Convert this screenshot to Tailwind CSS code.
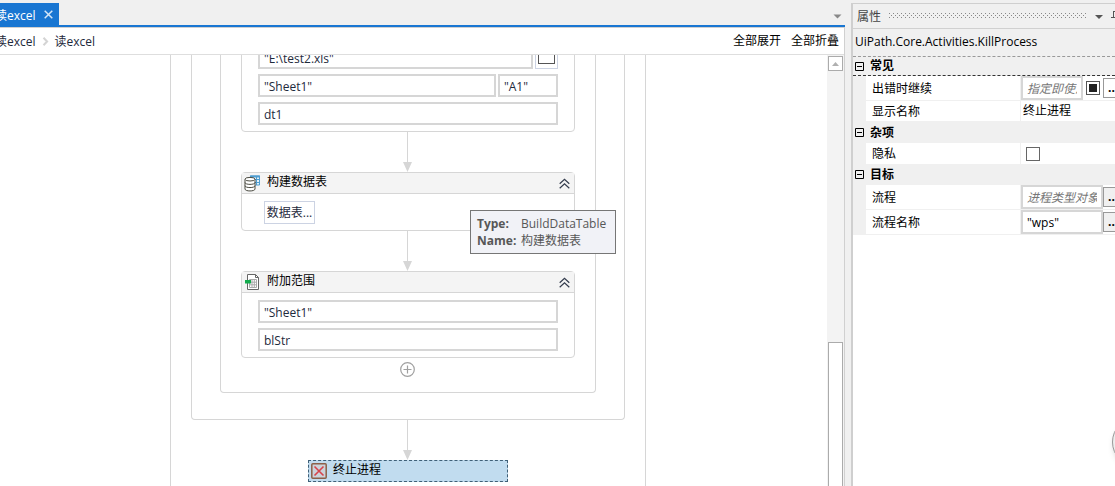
<!DOCTYPE html>
<html lang="zh-CN">
<head>
<meta charset="utf-8">
<title>读excel</title>
<script src="https://cdn.jsdelivr.net/npm/@tailwindcss/browser@4"></script>
</head>
<body class="h-screen overflow-hidden flex bg-[#f0f0f0] text-black text-[12px] leading-4 font-['Open_Sans','Noto_Sans_CJK_SC',sans-serif]">

<main class="flex-1 min-w-0 flex flex-col">
  <header class="flex items-end h-[27px] shrink-0 border-b-2 border-[#1976d2] pr-[3px]">
    <div class="flex items-center h-[22px] w-[59px] bg-[#1976d2] text-white overflow-hidden shrink-0">
      <span class="-ml-[5px] pt-[3px] whitespace-nowrap">读excel</span>
      <button aria-label="关闭" class="ml-2 shrink-0"><svg width="9" height="9" viewBox="0 0 9 9" stroke="#d5e6f7" stroke-width="1.5" fill="none"><path d="M.7.7l7.6 7.6M8.3.7L.7 8.3"/></svg></button>
    </div>
    <button aria-label="标签列表" class="ml-auto mb-[6px]"><svg width="9" height="5" viewBox="0 0 9 5"><path d="M.5.5h8l-4 4z" fill="#888"/></svg></button>
  </header>
  <div class="flex flex-col flex-1 min-h-0 bg-white border-t border-r border-[#d0d0d0]">
    <nav class="flex items-center h-[27px] shrink-0 border-b border-[#dedede] pr-[5px] whitespace-nowrap text-[#1e2a3c]">
      <a href="#" class="-ml-[5px] pt-[2px]">读excel</a>
      <svg class="mx-[6px]" width="7" height="9" viewBox="0 0 7 9" fill="none" stroke="#d4d4d4" stroke-width="2"><path d="M1.5.7l3.6 3.8L1.5 8.3"/></svg>
      <a href="#" class="pt-[2px]">读excel</a>
      <button class="ml-auto text-black">全部展开</button>
      <button class="ml-[10px] text-black">全部折叠</button>
    </nav>
    <div class="flex flex-1 min-h-0">
      <section class="flex-1 min-w-0 overflow-hidden pr-[11px] flex justify-center items-start">
        <div class="-mt-4 w-[476px] shrink-0 border-x border-[#d6d6d6] flex flex-col items-center pb-8">
          <div class="border border-t-0 border-[#d6d6d6] rounded-b-sm px-7 pb-[26px]">
            <div class="w-[376px] border border-t-0 border-[#d6d6d6] rounded-b-sm flex flex-col items-center pb-[15px] text-[#1e2a3c]">

              <div class="w-[334px] border border-[#d6d6d6] rounded-sm px-4 py-[6px] flex flex-col gap-[5px]">
                <div class="flex gap-[2px]">
                  <input aria-label="工作簿路径" value='"E:\test2.xls"' class="flex-1 min-w-0 h-[23px] border-2 border-[#d6d6d6] bg-white px-1 pt-[2px]">
                  <button aria-label="浏览" class="w-[23px] h-[23px] border border-[#ccd3e3] flex items-center justify-center"><span class="block w-[17px] h-[13px] border border-[#555]"></span></button>
                </div>
                <div class="flex gap-[2px]">
                  <input aria-label="工作表" value='"Sheet1"' class="flex-1 min-w-0 h-[23px] border-2 border-[#d6d6d6] bg-white px-1 pt-[2px]">
                  <input aria-label="单元格" value='"A1"' class="w-[60px] h-[23px] border-2 border-[#d6d6d6] bg-white px-1 pt-[2px]">
                </div>
                <input aria-label="数据表" value="dt1" class="h-[23px] border-2 border-[#d6d6d6] bg-white px-1 pt-[2px]">
              </div>

              <svg width="10" height="40" viewBox="0 0 10 40" fill="#d6d6d6"><path d="M4 0h1v31H4zM0 30h9L4.5 40z"/></svg>

              <div class="w-[334px] border border-[#d6d6d6] rounded-sm">
                <div class="flex items-center h-[21px] bg-[#f4f4f4] border-b border-[#d6d6d6] pl-[2px] pr-1 text-black">
                  <svg width="17" height="17" viewBox="0 0 17 17" fill="none"><path d="M6.500 1h9v9h-4" fill="#e4f1fa" stroke="#4f9dd0"/><path d="M6 .5h10v2H6z" fill="#4f9dd0"/><path d="M11 4.500h5M11 7.500h5M12.500 2v8" stroke="#4f9dd0"/><path d="M1 4.500v9.500c0 2.600 10 2.600 10 0v-9.500" fill="#fff" stroke="#4a4a40"/><ellipse cx="6" cy="4.200" rx="5" ry="1.800" fill="#fff" stroke="#4a4a40"/><path d="M1 7.500c0 2.500 10 2.500 10 0M1 10.700c0 2.500 10 2.500 10 0" stroke="#4a4a40"/></svg>
                  <span class="ml-[6px] pb-[2px]">构建数据表</span>
                  <button aria-label="折叠" class="ml-auto"><svg width="11" height="11" viewBox="0 0 11 11" fill="none" stroke="#333c4d" stroke-width="1.200"><path d="M.7 5.700l4.800-4.500 4.800 4.500M.7 10.200l4.800-4.500 4.800 4.500"/></svg></button>
                </div>
                <button class="block ml-[22px] mt-[7px] mb-[6px] h-[23px] w-[51px] border border-[#ccd3e3] whitespace-nowrap">数据表...</button>
              </div>

              <svg width="10" height="40" viewBox="0 0 10 40" fill="#d6d6d6"><path d="M4 0h1v31H4zM0 30h9L4.500 40z"/></svg>

              <div class="w-[334px] border border-[#d6d6d6] rounded-sm">
                <div class="flex items-center h-[21px] bg-[#f4f4f4] border-b border-[#d6d6d6] pl-[2px] pr-1 text-black">
                  <svg width="17" height="17" viewBox="0 0 17 17" fill="none"><path d="M3.500 .5h8l3 3v12h-11z" fill="#fff" stroke="#666"/><path d="M11.500 .5v3h3" stroke="#666"/><path d="M5.500 5.500h7v8h-7zM5.500 8.200h7M5.500 10.800h7M8 5.500v8M10.300 5.500v8" stroke="#aaa"/><path d="M1 6h6v3.500H1z" fill="#12ab4c"/></svg>
                  <span class="ml-[6px] pb-[2px]">附加范围</span>
                  <button aria-label="折叠" class="ml-auto"><svg width="11" height="11" viewBox="0 0 11 11" fill="none" stroke="#333c4d" stroke-width="1.200"><path d="M.7 5.700l4.800-4.500 4.800 4.500M.7 10.200l4.800-4.500 4.800 4.500"/></svg></button>
                </div>
                <div class="flex flex-col gap-[5px] px-4 pt-[7px] pb-[6px]">
                  <input aria-label="附加工作表" value='"Sheet1"' class="h-[23px] border-2 border-[#d6d6d6] bg-white px-1 pt-[2px]">
                  <input aria-label="附加数据" value="blStr" class="h-[23px] border-2 border-[#d6d6d6] bg-white px-1 pt-[2px]">
                </div>
              </div>

              <button aria-label="添加活动" class="mt-1"><svg width="16" height="15" viewBox="0 0 16 15" fill="none" stroke="#a0a0a0" stroke-width="1.200"><circle cx="7.500" cy="7.500" r="6.800"/><path d="M7.500 3.500v8M3.500 7.500h8"/></svg></button>
            </div>
          </div>
          <svg width="10" height="40" viewBox="0 0 10 40" fill="#d6d6d6"><path d="M4 0h1v31H4zM0 30h9L4.500 40z"/></svg>
          <div class="w-[200px] h-[22px] bg-[#c1dcef] border border-dashed border-[#3f6078] flex items-center pl-[2px]">
            <svg width="16" height="16" viewBox="0 0 16 16" fill="none"><rect x=".8" y=".8" width="14.400" height="14.400" rx="1" fill="#cdd3da" stroke="#8c6048" stroke-width="1.500"/><path d="M3.500 3.500l9 9M12.500 3.500l-9 9" stroke="#d8434b" stroke-width="1.600"/></svg>
            <span class="ml-[6px] pb-[2px]">终止进程</span>
          </div>
        </div>
      </section>
      <aside aria-label="滚动条" class="w-[17px] shrink-0 bg-[#f3f3f3] flex flex-col px-px pt-px">
        <button aria-label="向上滚动" class="h-[15px] shrink-0 border border-[#ababab] bg-white flex items-center justify-center"><svg width="7" height="4" viewBox="0 0 7 4"><path d="M0 4h7L3.500 0z" fill="#b0b0b0"/></svg></button>
        <div class="grow-[272]"></div>
        <div class="grow-[143] border border-b-0 border-[#ababab] bg-white"></div>
      </aside>
    </div>
  </div>
</main>

<aside class="ml-[6px] mt-[3px] w-[264px] shrink-0 border-l-2 border-t border-[#cfcfcf] flex flex-col overflow-hidden whitespace-nowrap">
  <div class="flex items-center h-6 shrink-0 pl-1 text-[#444]">
    <span class="pt-[2px]">属性</span>
    <svg class="ml-2 shrink-0" width="198" height="6" aria-hidden="true"><defs><pattern id="grip" width="4" height="4" patternUnits="userSpaceOnUse"><path d="M0 0h1v1H0zM2 2h1v1H2z" fill="#888"/></pattern></defs><rect width="198" height="6" fill="url(#grip)"/></svg>
    <button aria-label="选项" class="ml-2 pt-[2px] shrink-0"><svg width="8" height="4" viewBox="0 0 8 4"><path d="M0 0h8L4 4z" fill="#555"/></svg></button>
    <button aria-label="固定" class="ml-2 shrink-0"><svg width="11" height="11" viewBox="0 0 11 11" fill="none" stroke="#555"><path d="M2.500 0v6.500M2.500 .5h6v6M0 6.500h11M5.500 6.500v4"/></svg></button>
  </div>
  <h2 class="flex items-center h-7 shrink-0 border-t border-[#d0d0d0] pl-[2px] pb-[2px]">UiPath.Core.Activities.KillProcess</h2>
  <div class="flex-1 bg-white">
    <h3 class="flex items-center h-5 bg-[#f0f0f0] border-y border-dashed border-b-[#333] border-t-[#999] font-bold pl-[2px]"><button aria-label="折叠 常见" class="mr-[6px]"><svg width="9" height="9" viewBox="0 0 9 9" fill="none" stroke="#000"><path d="M.5.5h8v8h-8zM2 4.500h5"/></svg></button>常见</h3>
    <div class="flex pl-[13px] bg-[#f0f0f0]">
      <div class="flex flex-1 h-[25px] bg-white border-b border-[#f0f0f0]">
        <label for="p1" class="w-[155px] shrink-0 border-r border-[#f0f0f0] pl-[6px] pt-[2px] flex items-center">出错时继续</label>
        <div class="flex items-center">
          <input id="p1" placeholder="指定即使活动失败" class="w-[62px] shrink-0 h-6 border-2 border-[#d6d6d6] px-1 italic placeholder:text-[#777]">
          <button aria-label="切换" class="ml-[3px] w-[14px] h-[14px] shrink-0 border border-[#555] flex items-center justify-center"><span class="block size-2 bg-[#222]"></span></button>
          <button aria-label="编辑 出错时继续" class="ml-[3px] w-6 h-5 shrink-0 border border-[#999] font-bold text-left pl-1">...</button>
        </div>
      </div>
    </div>
    <div class="flex pl-[13px] bg-[#f0f0f0]">
      <div class="flex flex-1 h-5 bg-white">
        <label for="p2" class="w-[155px] shrink-0 border-r border-[#f0f0f0] pl-[6px] pt-[2px] flex items-center">显示名称</label>
        <input id="p2" value="终止进程" class="min-w-0 flex-1 pl-[2px]">
      </div>
    </div>
    <h3 class="flex items-center h-[22px] bg-[#f0f0f0] font-bold pl-[2px]"><button aria-label="折叠 杂项" class="mr-[6px]"><svg width="9" height="9" viewBox="0 0 9 9" fill="none" stroke="#000"><path d="M.5.5h8v8h-8zM2 4.500h5"/></svg></button><span class="pt-[2px]">杂项</span></h3>
    <div class="flex pl-[13px] bg-[#f0f0f0]">
      <div class="flex flex-1 h-[21px] bg-white">
        <label for="p3" class="w-[155px] shrink-0 border-r border-[#f0f0f0] pl-[6px] flex items-center">隐私</label>
        <div class="flex items-center pl-[5px]"><input id="p3" type="checkbox" class="appearance-none size-[14px] border border-[#666]"></div>
      </div>
    </div>
    <h3 class="flex items-center h-[21px] bg-[#f0f0f0] font-bold pl-[2px]"><button aria-label="折叠 目标" class="mr-[6px]"><svg width="9" height="9" viewBox="0 0 9 9" fill="none" stroke="#000"><path d="M.5.5h8v8h-8zM2 4.500h5"/></svg></button>目标</h3>
    <div class="flex pl-[13px] bg-[#f0f0f0]">
      <div class="flex flex-1 h-[25px] bg-white border-b border-[#f0f0f0]">
        <label for="p4" class="w-[155px] shrink-0 border-r border-[#f0f0f0] pl-[6px] pt-[2px] flex items-center">流程</label>
        <div class="flex items-center">
          <input id="p4" placeholder="进程类型对象的变量" class="w-[82px] shrink-0 h-6 border-2 border-[#d6d6d6] px-1 italic placeholder:text-[#777]">
          <button aria-label="编辑 流程" class="w-6 h-5 shrink-0 border border-[#999] bg-[#f0f0f0] font-bold text-left pl-1">...</button>
        </div>
      </div>
    </div>
    <div class="flex pl-[13px] bg-[#f0f0f0]">
      <div class="flex flex-1 h-[25px] bg-white border-b border-[#f0f0f0]">
        <label for="p5" class="w-[155px] shrink-0 border-r border-[#f0f0f0] pl-[6px] pt-[2px] flex items-center">流程名称</label>
        <div class="flex items-center">
          <input id="p5" value='"wps"' class="w-[82px] shrink-0 h-6 border-2 border-[#d6d6d6] px-1">
          <button aria-label="编辑 流程名称" class="w-6 h-5 shrink-0 border border-[#999] bg-[#f0f0f0] font-bold text-left pl-1">...</button>
        </div>
      </div>
    </div>
  </div>
</aside>

<div role="tooltip" class="absolute left-[470px] top-[210px] w-[146px] h-[44px] border border-[#767676] bg-[#f1f2f7] text-[#575757] px-[6px] pt-1 grid grid-cols-[44px_1fr] auto-rows-[17px] leading-[17px] whitespace-nowrap">
  <b>Type:</b><span>BuildDataTable</span>
  <b>Name:</b><span>构建数据表</span>
</div>
<button aria-label="悬浮助手" class="absolute -right-[47px] bottom-[19px] size-[50px] rounded-full border border-[#999] bg-[#eee] shadow-md"></button>
</body>
</html>
